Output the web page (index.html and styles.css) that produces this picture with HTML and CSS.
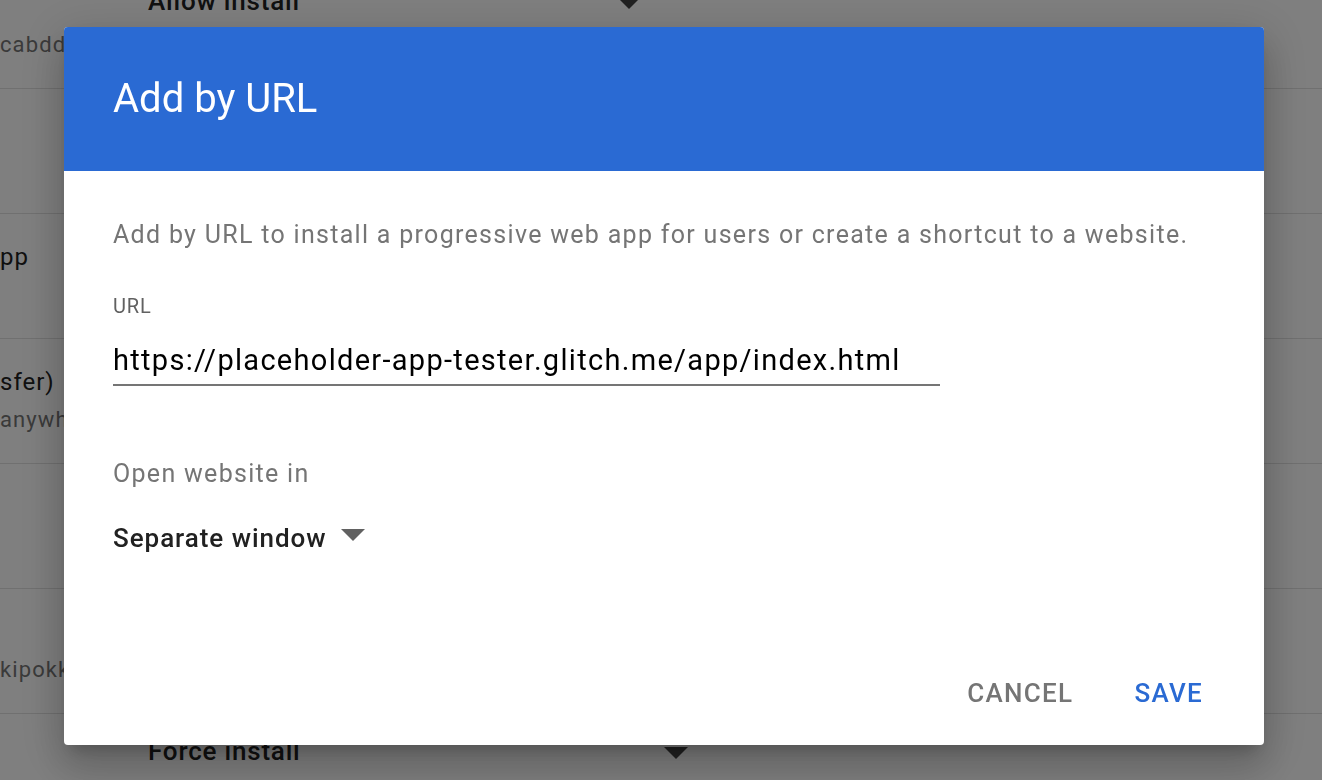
FILE: index.html
```html
<!DOCTYPE html>
<html lang="en">
<head>
<meta charset="utf-8">
<title>Add by URL</title>
<link rel="stylesheet" href="styles.css">
</head>
<body>
<main class="page" aria-hidden="true">
  <div class="row">
    <div class="name"><div class="title">&nbsp;</div><div class="sub">cabddhjflkpnmgaoeicbdkf</div></div>
    <div class="select select-a"><span>Allow install</span><i class="caret caret-dark"></i></div>
  </div>
  <div class="row">
    <div class="name"><div class="title">&nbsp;</div><div class="sub">&nbsp;</div></div>
    <div class="select select-a"><span>&nbsp;</span></div>
  </div>
  <div class="row">
    <div class="name"><div class="title">pp</div><div class="sub">&nbsp;</div></div>
    <div class="select select-a"><span>&nbsp;</span></div>
  </div>
  <div class="row">
    <div class="name"><div class="title">sfer)</div><div class="sub">anywhere transfer</div></div>
    <div class="select select-a"><span>&nbsp;</span></div>
  </div>
  <div class="row">
    <div class="name"><div class="title">&nbsp;</div><div class="sub">&nbsp;</div></div>
    <div class="select select-a"><span>&nbsp;</span></div>
  </div>
  <div class="row">
    <div class="name"><div class="title">&nbsp;</div><div class="sub">kipokkhmjlfncdabgoe</div></div>
    <div class="select select-a"><span>&nbsp;</span></div>
  </div>
  <div class="row">
    <div class="name"><div class="title">&nbsp;</div><div class="sub">&nbsp;</div></div>
    <div class="select select-b"><span>Force install</span><i class="caret caret-dark"></i></div>
  </div>
</main>

<div class="scrim">
  <section class="dialog" role="dialog" aria-labelledby="dlg-title">
    <header class="dialog-head">
      <h1 id="dlg-title">Add by URL</h1>
    </header>
    <div class="dialog-body">
      <p class="desc">Add by URL to install a progressive web app for users or create a shortcut to a website.</p>
      <div class="label">URL</div>
      <div class="field">https://placeholder-app-tester.glitch.me/app/index.html</div>
      <div class="label-lg">Open website in</div>
      <div class="dd"><span>Separate window</span><i class="caret"></i></div>
      <div class="actions">
        <button class="btn btn-cancel">CANCEL</button>
        <button class="btn btn-save">SAVE</button>
      </div>
    </div>
  </section>
</div>
</body>
</html>
```

FILE: styles.css
```css
* { box-sizing: border-box; }
html, body { margin: 0; padding: 0; }
body {
  background: #fff;
  font-family: Roboto, "Noto Sans", Arial, sans-serif;
  color: #212121;
  overflow: hidden;
  width: 1322px;
  height: 780px;
}

/* background page */
.page {
  margin-top: -36px;
  height: 816px;
  overflow: hidden;
}
.row {
  height: 125px;
  border-bottom: 1px solid #e0e0e0;
  display: flex;
  align-items: flex-start;
}
.name {
  width: 148px;
  overflow: hidden;
  white-space: nowrap;
  padding-top: 28px;
}
.title {
  font-size: 24px;
  line-height: 30px;
  letter-spacing: 1px;
  color: #212121;
}
.sub {
  margin-top: 9px;
  font-size: 22px;
  line-height: 28px;
  letter-spacing: 1.1px;
  color: #757575;
}
.select {
  display: flex;
  justify-content: space-between;
  align-items: center;
  padding-top: 22px;
  font-size: 26px;
  font-weight: 500;
  line-height: 30px;
  letter-spacing: 0.8px;
  color: #212121;
}
.select-a { width: 493px; }
.select-b { width: 540px; }
.caret {
  display: block;
  width: 0;
  height: 0;
  border-left: 12px solid transparent;
  border-right: 12px solid transparent;
  border-top: 12px solid #616161;
}
.caret-dark { border-top-color: #424242; margin-top: 4px; }

/* scrim + dialog */
.scrim {
  position: fixed;
  inset: 0;
  background: rgba(0, 0, 0, 0.5);
  padding: 27px 0 0 64px;
}
.dialog {
  width: 1200px;
  height: 718px;
  background: #fff;
  border-radius: 4px;
  overflow: hidden;
  box-shadow: 0 11px 15px -7px rgba(0,0,0,.2), 0 24px 38px 3px rgba(0,0,0,.14), 0 9px 46px 8px rgba(0,0,0,.12);
}
.dialog-head {
  height: 144px;
  background: #2a6ad3;
  padding: 0 49px;
  display: flex;
  align-items: center;
}
.dialog-head h1 {
  margin: 0;
  font-size: 40px;
  font-weight: 400;
  line-height: 48px;
  color: #fff;
  padding-bottom: 1px;
}
.dialog-body {
  padding: 48px 61px 0 49px;
}
.desc {
  margin: 0;
  font-size: 25px;
  line-height: 32px;
  letter-spacing: 1.3px;
  color: #757575;
}
.label {
  margin-top: 43px;
  font-size: 20px;
  line-height: 24px;
  letter-spacing: 0.9px;
  color: #616161;
}
.field {
  margin-top: 24px;
  width: 827px;
  font-size: 29px;
  line-height: 36px;
  letter-spacing: 1.3px;
  color: #000;
  padding-bottom: 6px;
  border-bottom: 2px solid #757575;
  white-space: nowrap;
}
.label-lg {
  margin-top: 72px;
  font-size: 25px;
  line-height: 32px;
  letter-spacing: 1.3px;
  color: #757575;
}
.dd {
  margin-top: 32px;
  display: flex;
  align-items: center;
  gap: 15px;
  font-size: 26px;
  font-weight: 500;
  line-height: 32px;
  letter-spacing: 0.95px;
  color: #212121;
}
.dd .caret { margin-top: -6px; }
.actions {
  margin-top: 123px;
  display: flex;
  justify-content: flex-end;
  gap: 61px;
}
.btn {
  border: 0;
  background: none;
  padding: 0;
  font-family: inherit;
  font-size: 26px;
  font-weight: 500;
  line-height: 32px;
  letter-spacing: 1.3px;
  cursor: pointer;
}
.btn-cancel { color: #757575; }
.btn-save { color: #2a6ad3; }
```
